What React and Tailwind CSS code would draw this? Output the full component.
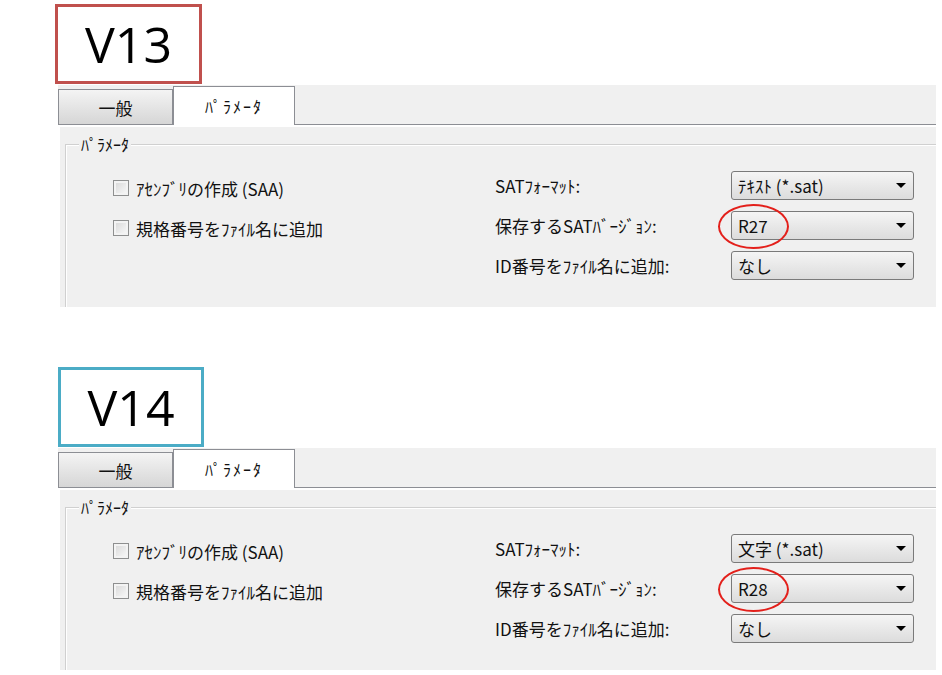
const jp = "font-['Noto_Sans_CJK_JP',sans-serif]"

function Arrow() {
  return (
    <svg width="10" height="5" viewBox="0 0 10 5" className="shrink-0">
      <path d="M0 0H10L5 5Z" fill="#000" />
    </svg>
  )
}

function Combo({ text, circled }) {
  return (
    <div className="relative flex h-[29px] w-[183px] items-center rounded-[3px] border border-[#7a7a7a] bg-linear-to-b from-[#f5f5f5] to-[#dcdcdc] pl-[6px] pr-[7px]">
      <span className="flex-1 text-[17px] leading-none">{text}</span>
      <Arrow />
      {circled && (
        <div className="absolute -left-[14px] -top-[8px] h-[45px] w-[71px] rounded-[50%] border-[2.5px] border-[#e3201b]" />
      )}
    </div>
  )
}

function Check({ label }) {
  return (
    <div className="mt-[5px] flex items-center gap-[7px]">
      <span className="h-[16px] w-[16px] shrink-0 border border-[#8e8f8f] bg-linear-to-br from-[#d6d6d6] to-[#fbfbfb] shadow-[inset_0_0_0_2px_#f3f3f3]" />
      <span className="text-[17px] leading-none">{label}</span>
    </div>
  )
}

function Section({ boxClass, title, format, version }) {
  const rows = [
    { check: 'ｱｾﾝﾌﾞﾘの作成 (SAA)', label: 'SATﾌｫｰﾏｯﾄ:', value: format },
    { check: '規格番号をﾌｧｲﾙ名に追加', label: '保存するSATﾊﾞｰｼﾞｮﾝ:', value: version, circled: true },
    { check: null, label: 'ID番号をﾌｧｲﾙ名に追加:', value: 'なし' },
  ]

  return (
    <div className="flex h-[363px] flex-col pt-[4px]">
      <div className={`flex h-[80px] items-center justify-center border-[3px] bg-white ${boxClass}`}>
        <span className="font-['Open_Sans',sans-serif] text-[50px] leading-none text-black">{title}</span>
      </div>

      {/* tab strip */}
      <div className="ml-[58px] mt-px flex h-[40px] w-[878px] items-end bg-[#f0f0f0]">
        <div className="flex h-[36px] w-[115px] items-center justify-center border border-[#8c8e94] bg-linear-to-b from-[#f4f4f4] to-[#d6d6d6] text-[17px] leading-none">
          一般
        </div>
        <div className="flex h-[39px] w-[122px] items-center justify-center border border-b-0 border-[#8c8e94] bg-white text-[16px] leading-none tracking-[2px]">
          ﾊﾟﾗﾒｰﾀ
        </div>
        <div className="h-full flex-1 border-b border-[#8c8e94]" />
      </div>

      {/* tab page */}
      <div className="ml-[60px] flex h-[182px] w-[876px] flex-col border-t-2 border-white bg-[#f0f0f0] pl-[5px] pt-[17px]">
        <div className="relative flex-1 border-l border-t border-[#d0d0d0] pt-[26px] shadow-[inset_1px_1px_0_#ffffff]">
          <span className="absolute -top-[9px] left-[13px] bg-[#f0f0f0] px-[2px] text-[16px] leading-none">ﾊﾟﾗﾒｰﾀ</span>

          <div className="flex flex-col gap-[11px]">
            {rows.map((r) => (
              <div key={r.label} className="flex h-[29px] items-center">
                <div className="w-[429px] pl-[47px]">{r.check && <Check label={r.check} />}</div>
                <div className="w-[236px] text-[17px] leading-none">{r.label}</div>
                <Combo text={r.value} circled={r.circled} />
              </div>
            ))}
          </div>
        </div>
      </div>
    </div>
  )
}

export default function App() {
  return (
    <div className={`h-[675px] w-[942px] overflow-hidden bg-white text-[#111] ${jp}`}>
      <Section boxClass="ml-[55px] w-[147px] border-[#c0504d]" title="V13" format="ﾃｷｽﾄ (*.sat)" version="R27" />
      <Section boxClass="ml-[58px] w-[146px] border-[#4bacc6]" title="V14" format="文字 (*.sat)" version="R28" />
    </div>
  )
}
